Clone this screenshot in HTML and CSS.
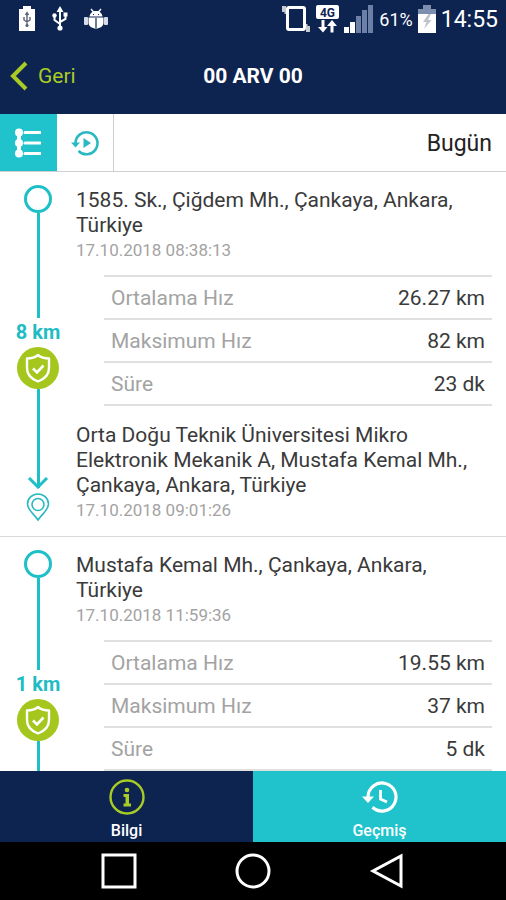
FILE: index.html
```html
<!DOCTYPE html>
<html lang="tr">
<head>
<meta charset="utf-8">
<meta name="viewport" content="width=device-width, initial-scale=1">
<title>00 ARV 00</title>
<link rel="stylesheet" href="styles.css">
</head>
<body>
<svg class="defs" aria-hidden="true">
  <symbol id="shield" viewBox="0 0 42 42">
    <circle cx="21" cy="21" r="21" fill="#a5c61c"/>
    <path d="M21 8c3 2.500 7 3.500 11 3.500V21c0 6.500-4.500 11-11 13.500C14.500 32 10 27.500 10 21v-9.500c4 0 8-1 11-3.500z" fill="none" stroke="#fff" stroke-width="2.400" stroke-linejoin="round"/>
    <path d="M16 21.500l4 4 6.500-7" fill="none" stroke="#fff" stroke-width="2.600"/>
  </symbol>
</svg>
<div class="screen">
  <header class="top">
    <div class="status">
      <div class="status-group notices">
        <svg width="18" height="26" viewBox="0 0 18 26"><path d="M1 3h4V0h8v3h4v22H1z" fill="#fff"/><path d="M9 7v12M6 11v3l3 2 3-2v-3M7.500 9L9 6.500 10.500 9" fill="none" stroke="#5b6274" stroke-width="1.400"/><circle cx="9" cy="19.500" r="1.600" fill="#5b6274"/></svg>
        <svg width="16" height="26" viewBox="0 0 16 26"><path d="M8 4v18M2.500 10v4L8 18M13.500 9v4L8 16" fill="none" stroke="#fff" stroke-width="2"/><path d="M8 0l3.500 6h-7zM11.500 6.500h4v4h-4z" fill="#fff"/><circle cx="2.500" cy="9.500" r="2.200" fill="#fff"/><circle cx="8" cy="22" r="2.600" fill="#fff"/></svg>
        <svg width="24" height="22" viewBox="0 0 24 22"><path d="M7 1l2.500 3M17 1l-2.500 3" stroke="#fff" stroke-width="1.400"/><path d="M5.500 8.500C6 5 8.500 3 12 3s6 2 6.500 5.500z" fill="#fff"/><path d="M4.500 9.500h15V15c0 3-3.500 5.500-7.500 5.500S4.500 18 4.500 15z" fill="#fff"/><rect x="0" y="9" width="4" height="8" rx="1" fill="#d8dce6"/><rect x="20" y="9" width="4" height="8" rx="1" fill="#d8dce6"/><path d="M12 10v10M9 6.500h1M14 6.500h1" stroke="#0d2350" stroke-width="1.200"/></svg>
      </div>
      <div class="status-group">
        <svg width="30" height="28" viewBox="0 0 30 28"><rect x="6.500" y="2.500" width="17" height="22" rx="1.500" fill="none" stroke="#fff" stroke-width="3"/><path d="M1 1h4v8H3.500V7H1zM29 27h-4v-8h1.500v2H29z" fill="#c9cbd0"/></svg>
        <svg width="23" height="28" viewBox="0 0 23 28"><rect width="23" height="14" rx="2" fill="#fff"/><text class="network" x="11.500" y="11.500" text-anchor="middle">4G</text><path d="M5.500 15h3v7h3L7 27.500 2 22h3.500zM14.500 27.500h3V21h3.500l-5-6-5 6h3.500z" fill="#fff"/></svg>
        <svg width="30" height="28" viewBox="0 0 30 28"><path d="M0 22h5v6H0zM6 17h5v11H6z" fill="#fff"/><path d="M12 11h5v17h-5zM18 5h5v23h-5zM24 0h5v28h-5z" fill="#6b7fa7"/></svg>
        <span class="percent">61%</span>
        <svg width="18" height="28" viewBox="0 0 18 28"><path d="M5 0h8v4h5v5H0V4h5z" fill="#7d8eae"/><path d="M0 9h18v19H0z" fill="#fff"/><path d="M10.500 9L5 17h3.500L6 24l7.500-9H10l3-6z" fill="#bfc3cb"/></svg>
        <time class="clock">14:55</time>
      </div>
    </div>
    <div class="titlebar">
      <button class="back" type="button"><svg width="18" height="30" viewBox="0 0 18 30"><path d="M16 2L3 15l13 13" fill="none" stroke="#a8cb25" stroke-width="4"/></svg>Geri</button>
      <h1>00 ARV 00</h1>
    </div>
  </header>

  <div class="toolbar">
    <button class="tool active" type="button" aria-label="Liste"><svg width="26" height="30" viewBox="0 0 26 30"><path d="M4 5v20" stroke="#fff" stroke-width="4"/><g fill="#fff"><circle cx="4" cy="4.500" r="4"/><circle cx="4" cy="15" r="4"/><circle cx="4" cy="25.500" r="4"/></g><path d="M10 4.500h15M10 15h15M10 25.500h15" stroke="#fff" stroke-width="3" stroke-linecap="round"/></svg></button>
    <button class="tool" type="button" aria-label="Oynat"><svg width="28" height="26" viewBox="0 0 28 26"><path d="M4.500 13A11 11 0 1 1 7.500 20.800" fill="none" stroke="#2bb9c1" stroke-width="2.600"/><path d="M0 12.500h9L4.500 17.500z" fill="#2bb9c1"/><path d="M12.500 8l7.500 5-7.500 5z" fill="#2bb9c1"/></svg></button>
    <button class="day" type="button">Bugün</button>
  </div>

  <main class="trips">
    <article class="trip">
      <div class="route">
        <span class="start"></span>
        <span class="leg"></span>
        <strong class="distance">8 km</strong>
        <svg class="badge" width="42" height="42"><use href="#shield"/></svg>
        <span class="leg last"></span>
        <svg class="head" width="22" height="12" viewBox="0 0 22 12"><path d="M2 1l9 9 9-9" fill="none" stroke="#1fbfc7" stroke-width="3"/></svg>
        <svg class="pin" width="24" height="28" viewBox="0 0 24 28"><path d="M12 27C8 21 1.500 17 1.500 11a10.500 10 0 0 1 21 0C22.500 17 16 21 12 27z" fill="none" stroke="#2bb9c1" stroke-width="1.600"/><circle cx="12" cy="11.500" r="6" fill="none" stroke="#2bb9c1" stroke-width="1.600"/></svg>
      </div>
      <div class="details">
        <p class="address">1585. Sk., Çiğdem Mh., Çankaya, Ankara, Türkiye</p>
        <time class="date">17.10.2018 08:38:13</time>
        <table class="stats">
          <tr><th scope="row">Ortalama Hız</th><td>26.27 km</td></tr>
          <tr><th scope="row">Maksimum Hız</th><td>82 km</td></tr>
          <tr><th scope="row">Süre</th><td>23 dk</td></tr>
        </table>
        <p class="address">Orta Doğu Teknik Üniversitesi Mikro Elektronik Mekanik A, Mustafa Kemal Mh., Çankaya, Ankara, Türkiye</p>
        <time class="date">17.10.2018 09:01:26</time>
      </div>
    </article>
    <article class="trip ongoing">
      <div class="route">
        <span class="start"></span>
        <span class="leg"></span>
        <strong class="distance">1 km</strong>
        <svg class="badge" width="42" height="42"><use href="#shield"/></svg>
        <span class="leg"></span>
      </div>
      <div class="details">
        <p class="address">Mustafa Kemal Mh., Çankaya, Ankara, Türkiye</p>
        <time class="date">17.10.2018 11:59:36</time>
        <table class="stats">
          <tr><th scope="row">Ortalama Hız</th><td>19.55 km</td></tr>
          <tr><th scope="row">Maksimum Hız</th><td>37 km</td></tr>
          <tr><th scope="row">Süre</th><td>5 dk</td></tr>
        </table>
      </div>
    </article>
  </main>

  <nav class="tabs">
    <a class="tab" href="#info"><svg width="36" height="36" viewBox="0 0 36 36"><circle cx="18" cy="18" r="16.500" fill="none" stroke="#a8cb25" stroke-width="2.400"/><circle cx="18" cy="11" r="2.300" fill="#a8cb25"/><path d="M14.500 15h5.500v9.500h2V27.500h-7.500v-3h2V18h-2z" fill="#a8cb25"/></svg>Bilgi</a>
    <a class="tab current" href="#history"><svg width="36" height="36" viewBox="0 0 36 36"><path d="M6 18A14 14 0 1 1 10.500 28.300" fill="none" stroke="#fff" stroke-width="3.200"/><path d="M18.500 11v9l6.500 3" fill="none" stroke="#fff" stroke-width="2.800"/><path d="M0 17.500h12L6 24z" fill="#fff"/></svg>Geçmiş</a>
  </nav>
  <div class="system">
    <button type="button" aria-label="Son uygulamalar"><svg width="36" height="36" viewBox="0 0 36 36"><rect x="2" y="2" width="32" height="32" fill="none" stroke="#fff" stroke-width="3"/></svg></button>
    <button type="button" aria-label="Ana ekran"><svg width="36" height="36" viewBox="0 0 36 36"><circle cx="18" cy="18" r="16" fill="none" stroke="#fff" stroke-width="3"/></svg></button>
    <button type="button" aria-label="Geri"><svg width="36" height="36" viewBox="0 0 36 36"><path d="M32 3v30L4 18z" fill="none" stroke="#fff" stroke-width="3"/></svg></button>
  </div>
</div>
</body>
</html>
```
FILE: styles.css
```css
* { box-sizing: border-box; }

body {
  margin: 0;
  font-family: Roboto, "Noto Sans", sans-serif;
  color: #3a3a3a;
  background: #fff;
}

svg { display: block; flex: none; }
button { border: 0; padding: 0; background: none; font: inherit; color: inherit; }
p, h1 { margin: 0; }

.defs { position: absolute; width: 0; height: 0; }

.screen { display: flex; flex-direction: column; height: 100vh; }

.top { background: #0d2350; color: #fff; }
.status {
  display: flex;
  justify-content: space-between;
  align-items: center;
  height: 38px;
  padding: 0 8px 0 18px;
}
.status-group { display: flex; align-items: center; gap: 5px; }
.notices { gap: 16px; }
.network { font: 700 12px Roboto, sans-serif; fill: #0d2350; }
.percent { font-size: 18px; }
.clock { font-size: 23px; }

.titlebar {
  display: grid;
  grid-template-columns: 1fr auto 1fr;
  align-items: center;
  height: 76px;
  padding: 0 10px;
}
.back {
  display: flex;
  align-items: center;
  gap: 10px;
  font-size: 21px;
  color: #a8cb25;
}
h1 { font-size: 21px; font-weight: 700; }

.toolbar { display: flex; height: 58px; border-bottom: 1px solid #cfcfcf; flex: none; }
.tool {
  display: flex;
  align-items: center;
  justify-content: center;
  width: 57px;
  border-right: 1px solid #cfcfcf;
}
.tool.active { background: #20c3cb; border-color: #20c3cb; }
.day { flex: 1; padding: 2px 14px 0 0; text-align: right; font-size: 23px; color: #222; }

.trips { flex: 1; min-height: 0; overflow-y: auto; scrollbar-width: none; }
.trip { display: flex; border-bottom: 1px solid #d9d9d9; }
.ongoing { min-height: 312px; }

.route {
  display: flex;
  flex-direction: column;
  align-items: center;
  width: 76px;
  padding: 13px 0 15px;
}
.start { width: 28px; height: 28px; border: 3px solid #1fbfc7; border-radius: 50%; }
.leg { flex: 1 1 5px; width: 3px; background: #1fbfc7; }
.last { flex-basis: 0; margin-bottom: -11px; }
.head { margin-bottom: 4px; }
.distance { line-height: 29px; font-size: 20px; font-weight: 700; color: #20bcc4; }

.details { flex: 1; padding: 16px 14px 14px 0; }
.address { font-size: 21px; line-height: 25px; }
.date { display: block; font-size: 17px; line-height: 24px; color: #a3a3a3; }

.stats {
  width: calc(100% - 28px);
  margin: 13px 0 17px 28px;
  border-collapse: collapse;
  border-top: 2px solid #e0e0e0;
  font-size: 21px;
}
.stats tr { height: 43px; border-bottom: 2px solid #e0e0e0; }
.stats th { padding: 0 7px; text-align: left; font-weight: 400; color: #a3a3a3; }
.stats td { padding: 0 7px; text-align: right; }

.tabs { display: flex; flex: none; height: 71px; background: #0d2350; }
.tab {
  display: flex;
  flex: 1;
  flex-direction: column;
  align-items: center;
  padding-top: 8px;
  gap: 7px;
  font-size: 16px;
  font-weight: 500;
  line-height: 18px;
  color: #fff;
  text-decoration: none;
}
.current { background: #20c3cb; }

.system {
  display: flex;
  flex: none;
  justify-content: space-between;
  align-items: center;
  height: 58px;
  padding: 0 101px;
  background: #000;
}
```
